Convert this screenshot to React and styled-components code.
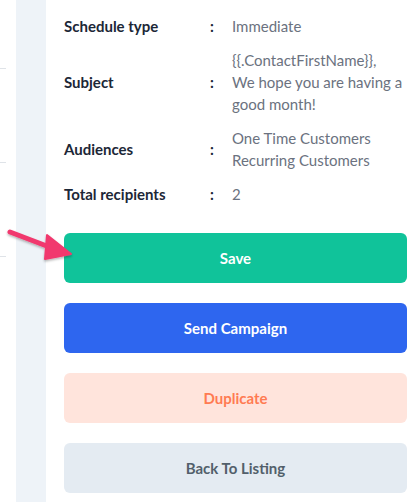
import React from 'react';
import styled, { createGlobalStyle } from 'styled-components';

const GlobalStyle = createGlobalStyle`
    html, body {
        margin: 0;
        padding: 0;
        background: #ffffff;
    }
    body {
        font-family: Lato, "Noto Sans", sans-serif;
    }
`;

const Page = styled.div`
    position: relative;
    display: flex;
    width: 420px;
    height: 502px;
    overflow: hidden;
    background: #ffffff;
`;

const Gutter = styled.div`
    width: 16px;
    padding-top: 68px;
    display: flex;
    flex-direction: column;
`;

const GutterLine = styled.div`
    width: 6px;
    height: 93px;
    border-top: 1px solid #dfe3e8;
`;

const Strip = styled.div`
    width: 30px;
    background: #eef3f8;
`;

const Panel = styled.section`
    flex: 1;
    padding: 15px 13px 0 18px;
    display: flex;
    flex-direction: column;
`;

const Details = styled.div`
    display: grid;
    grid-template-columns: 146px 22px 1fr;
    row-gap: 12px;
    align-items: center;
    font-size: 15px;
    line-height: 22px;
`;

const Label = styled.div`
    font-weight: 700;
    color: #1c2737;
`;

const Colon = styled.div`
    font-weight: 700;
    color: #1c2737;
`;

const Value = styled.div`
    color: #6b7280;
`;

const Actions = styled.div`
    margin-top: 28px;
    display: flex;
    flex-direction: column;
    gap: 20px;
`;

const Button = styled.button`
    height: 50px;
    border: none;
    border-radius: 6px;
    background: ${(p) => p.$bg};
    color: ${(p) => p.$fg};
    font-family: Lato, "Noto Sans", sans-serif;
    font-size: 15px;
    font-weight: 700;
    cursor: pointer;
`;

const Arrow = styled.svg`
    position: absolute;
    left: 0;
    top: 222px;
    overflow: visible;
`;

const rows = [
    { label: 'Schedule type', value: ['Immediate'] },
    { label: 'Subject', value: ['{{.ContactFirstName}},', 'We hope you are having a', 'good month!'] },
    { label: 'Audiences', value: ['One Time Customers', 'Recurring Customers'] },
    { label: 'Total recipients', value: ['2'] },
];

const buttons = [
    { text: 'Save', bg: '#10c39a', fg: '#ffffff' },
    { text: 'Send Campaign', bg: '#2e66ef', fg: '#ffffff' },
    { text: 'Duplicate', bg: '#ffe4dc', fg: '#ff7b52' },
    { text: 'Back To Listing', bg: '#e4ebf2', fg: '#525f6b' },
];

const App = () => {
    return (
        <Page>
            <GlobalStyle />
            <Gutter>
                <GutterLine />
                <GutterLine />
                <GutterLine />
            </Gutter>
            <Strip />
            <Panel>
                <Details>
                    {rows.map((r) => (
                        <React.Fragment key={r.label}>
                            <Label>{r.label}</Label>
                            <Colon>:</Colon>
                            <Value>
                                {r.value.map((line) => (
                                    <div key={line}>{line}</div>
                                ))}
                            </Value>
                        </React.Fragment>
                    ))}
                </Details>
                <Actions>
                    {buttons.map((b) => (
                        <Button key={b.text} $bg={b.bg} $fg={b.fg}>
                            {b.text}
                        </Button>
                    ))}
                </Actions>
            </Panel>
            <Arrow width="80" height="45" viewBox="0 0 80 45">
                <defs>
                    <filter id="arrowShadow" x="-20%" y="-40%" width="140%" height="180%">
                        <feDropShadow dx="0" dy="1.5" stdDeviation="1.2" floodColor="#000" floodOpacity="0.3" />
                    </filter>
                </defs>
                <g filter="url(#arrowShadow)" fill="#f1386e" stroke="#f1386e" strokeLinejoin="round" strokeLinecap="round">
                    <line x1="10" y1="10" x2="52" y2="26" strokeWidth="5" />
                    <polygon points="71,32 47,13 45,37" strokeWidth="2" />
                </g>
            </Arrow>
        </Page>
    );
};

export default App;
